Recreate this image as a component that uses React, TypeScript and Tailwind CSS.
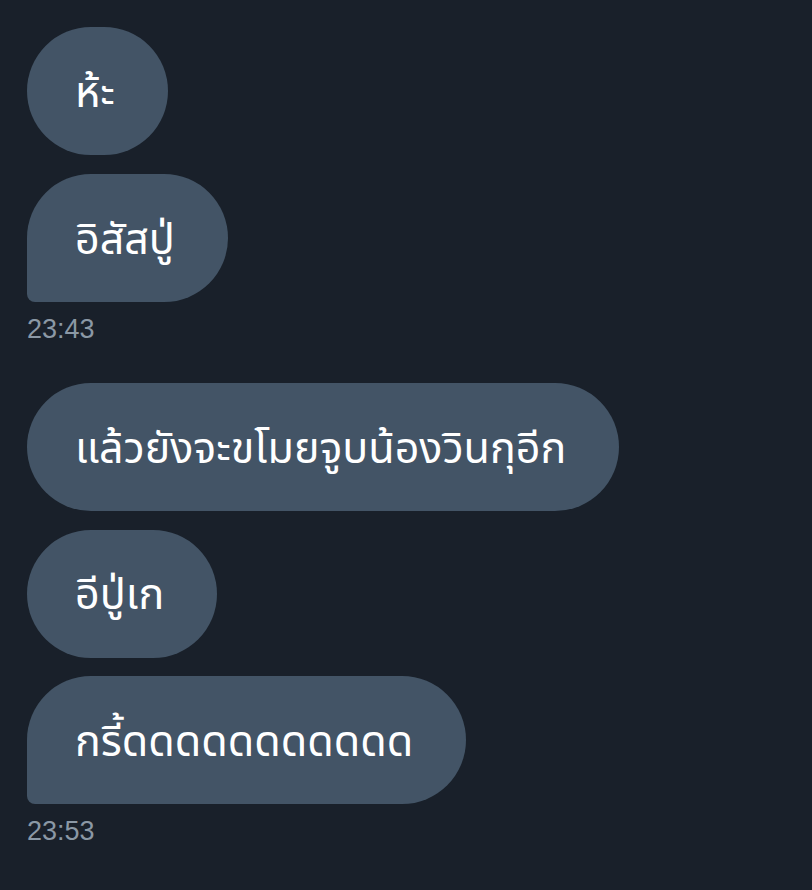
import React from "react";

const font = { fontFamily: '"Noto Sans Thai", "Noto Sans", "Liberation Sans", sans-serif' };

function Bubble({ text, tail }: { text: string; tail?: boolean }) {
  return (
    <div
      className={`self-start h-[128px] flex items-center pl-[48px] pr-[53px] pt-[4px] bg-[#435466] text-white text-[43px] leading-none rounded-[64px] ${tail ? "rounded-bl-[8px]" : ""}`}
    >
      <span>{text}</span>
    </div>
  );
}

function Time({ t, mb }: { t: string; mb: string }) {
  return <div className={`text-[27px] leading-none text-[#8b98a5] mt-[14px] ${mb}`} style={{ fontFamily: '"Liberation Sans", Arial, sans-serif' }}>{t}</div>;
}

export default function App() {
  return (
    <div className="w-[812px] h-[890px] bg-[#19202a] overflow-hidden pl-[27px] pt-[27px]" style={font}>
      <div className="flex flex-col gap-[19px]">
        <Bubble text="ห้ะ" />
        <Bubble text="อิสัสปู่" tail />
      </div>
      <Time t="23:43" mb="mb-[40px]" />
      <div className="flex flex-col gap-[18.5px]">
        <Bubble text="แล้วยังจะขโมยจูบน้องวินกุอีก" />
        <Bubble text="อีปู่เก" />
        <Bubble text="กรี้ดดดดดดดดดดด" tail />
      </div>
      <Time t="23:53" mb="mb-[40px]" />
    </div>
  );
}
